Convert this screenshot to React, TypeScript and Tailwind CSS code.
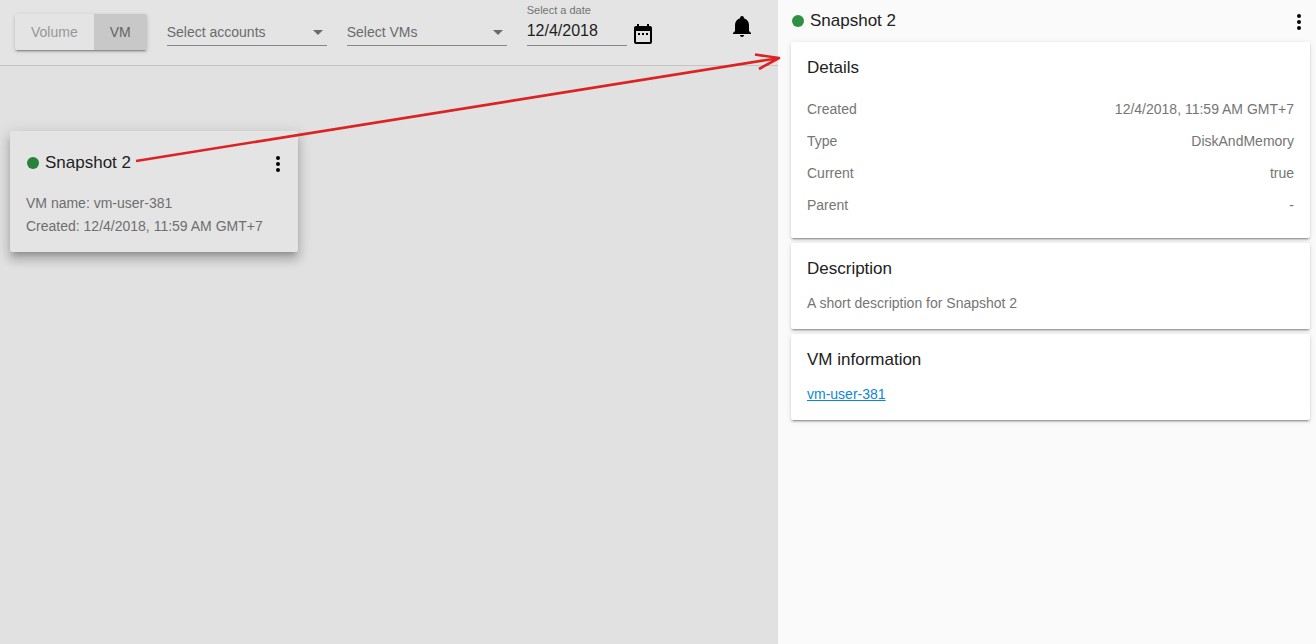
import type { ReactNode } from "react";

const icons = {
  bell: "M21,19V20H3V19L5,17V11C5,7.9 7.03,5.17 10,4.29C10,4.19 10,4.1 10,4A2,2 0 0,1 12,2A2,2 0 0,1 14,4C14,4.1 14,4.19 14,4.29C16.97,5.17 19,7.9 19,11V17L21,19M14,21A2,2 0 0,1 12,23A2,2 0 0,1 10,21",
  calendar:
    "M9,11H7V13H9V11M13,11H11V13H13V11M17,11H15V13H17V11M19,4H18V2H16V4H8V2H6V4H5C3.89,4 3,4.9 3,6V20A2,2 0 0,0 5,22H19A2,2 0 0,0 21,20V6A2,2 0 0,0 19,4M19,20H5V9H19V20Z",
  dots: "M12,16A2,2 0 0,1 14,18A2,2 0 0,1 12,20A2,2 0 0,1 10,18A2,2 0 0,1 12,16M12,10A2,2 0 0,1 14,12A2,2 0 0,1 12,14A2,2 0 0,1 10,12A2,2 0 0,1 12,10M12,4A2,2 0 0,1 14,6A2,2 0 0,1 12,8A2,2 0 0,1 10,6A2,2 0 0,1 12,4Z",
};

function IconButton({ icon, label }: { icon: keyof typeof icons; label: string }) {
  return (
    <button type="button" aria-label={label} className="block size-6 shrink-0 text-black">
      <svg viewBox="0 0 24 24" className="size-6" fill="currentColor" aria-hidden="true">
        <path d={icons[icon]} />
      </svg>
    </button>
  );
}

function FilterSelect({ label }: { label: string }) {
  return (
    <div className="relative mt-[18px] w-40">
      <select
        aria-label={label}
        className="block h-7 w-full appearance-none border-b border-[#858585] bg-transparent pr-6 text-sm text-[#6b6b6b] outline-none"
      >
        <option>{label}</option>
      </select>
      <svg
        viewBox="0 0 10 5"
        className="pointer-events-none absolute top-3 right-1 h-[5px] w-2.5"
        fill="#6b6b6b"
        aria-hidden="true"
      >
        <path d="M0 0h10L5 5z" />
      </svg>
    </div>
  );
}

function DetailCard({ title, children }: { title: string; children: ReactNode }) {
  return (
    <section className="rounded-xs bg-white p-4 shadow-[0_3px_1px_-2px_rgba(0,0,0,0.2),0_2px_2px_0_rgba(0,0,0,0.14),0_1px_5px_0_rgba(0,0,0,0.12)]">
      <h2 className="text-[17px] leading-5 text-[#212121]">{title}</h2>
      {children}
    </section>
  );
}

const details = [
  ["Created", "12/4/2018, 11:59 AM GMT+7"],
  ["Type", "DiskAndMemory"],
  ["Current", "true"],
  ["Parent", "-"],
];

export default function App() {
  return (
    <div className="relative flex min-h-screen overflow-hidden font-['Liberation_Sans',Arial,sans-serif]">
      <main className="min-w-0 flex-1 bg-[#e1e1e1]">
        <header className="flex h-[66px] items-start gap-5 border-b border-[#c4c4c4] bg-[#e4e4e4] pr-6 pl-[15px]">
          <div className="mt-3.5 flex h-9 shrink-0 overflow-hidden rounded-xs text-sm shadow-[0_3px_1px_-2px_rgba(0,0,0,0.2),0_2px_2px_0_rgba(0,0,0,0.14),0_1px_5px_0_rgba(0,0,0,0.12)]">
            <button type="button" aria-pressed="false" className="px-4 text-[#979797]">
              Volume
            </button>
            <button type="button" aria-pressed="true" className="bg-[#c8c8c8] px-4 text-[#646464]">
              VM
            </button>
          </div>
          <FilterSelect label="Select accounts" />
          <FilterSelect label="Select VMs" />
          <div className="flex gap-1">
            <div className="w-[100px] pt-1">
              <label htmlFor="date" className="block text-[11px] leading-3 text-[#737373]">
                Select a date
              </label>
              <input
                id="date"
                type="text"
                defaultValue="12/4/2018"
                className="block h-[30px] w-full border-b border-[#858585] bg-transparent text-base text-[#1e1e1e] outline-none"
              />
            </div>
            <div className="pt-[22px]">
              <IconButton icon="calendar" label="Open calendar" />
            </div>
          </div>
          <div className="ml-auto pt-3.5">
            <IconButton icon="bell" label="Notifications" />
          </div>
        </header>

        <article className="mt-[65px] ml-2.5 w-72 rounded-xs bg-[#e4e4e4] pt-4 pr-2 pb-3.5 pl-4 shadow-[0_5px_5px_-3px_rgba(0,0,0,0.2),0_8px_10px_1px_rgba(0,0,0,0.14),0_3px_14px_2px_rgba(0,0,0,0.12)]">
          <div className="flex h-8 items-center gap-1.5 pl-px">
            <span className="size-3 rounded-full bg-[#28823c]" />
            <h2 className="flex-1 text-[17px] leading-5 text-[#1e1e1e]">Snapshot 2</h2>
            <div className="pt-0.5">
              <IconButton icon="dots" label="Snapshot actions" />
            </div>
          </div>
          <div className="mt-[13px] text-sm leading-[23px] text-[#6e6e6e]">
            <p>VM name: vm-user-381</p>
            <p>Created: 12/4/2018, 11:59 AM GMT+7</p>
          </div>
        </article>
      </main>

      <aside className="w-[538px] shrink-0 bg-[#fafafa]">
        <div className="flex h-[42px] items-center gap-1.5 pr-[5px] pl-3.5">
          <span className="size-3 rounded-full bg-[#2d9144]" />
          <h1 className="flex-1 text-[17px] leading-5 text-[#212121]">Snapshot 2</h1>
          <div className="pt-0.5">
            <IconButton icon="dots" label="Snapshot actions" />
          </div>
        </div>
        <div className="flex flex-col gap-[5px] pr-1.5 pl-[13px] text-sm text-[#757575]">
          <DetailCard title="Details">
            <dl className="mt-[15px] mb-px">
              {details.map(([name, value]) => (
                <div key={name} className="flex h-8 items-center justify-between">
                  <dt>{name}</dt>
                  <dd>{value}</dd>
                </div>
              ))}
            </dl>
          </DetailCard>
          <DetailCard title="Description">
            <p className="mt-[15px] mb-px leading-[18px]">A short description for Snapshot 2</p>
          </DetailCard>
          <DetailCard title="VM information">
            <p className="mt-[15px] mb-px leading-[18px]">
              <a href="#vm-user-381" className="text-[#0c86da] underline">
                vm-user-381
              </a>
            </p>
          </DetailCard>
        </div>
      </aside>

      <svg
        width="782"
        height="170"
        viewBox="0 0 782 170"
        className="pointer-events-none absolute top-0 left-0"
        fill="none"
        stroke="#dc2323"
        strokeWidth="2.6"
        strokeLinejoin="round"
        aria-hidden="true"
      >
        <path d="M136 161L779 58M755 54.5L779 58L759 69" />
      </svg>
    </div>
  );
}
